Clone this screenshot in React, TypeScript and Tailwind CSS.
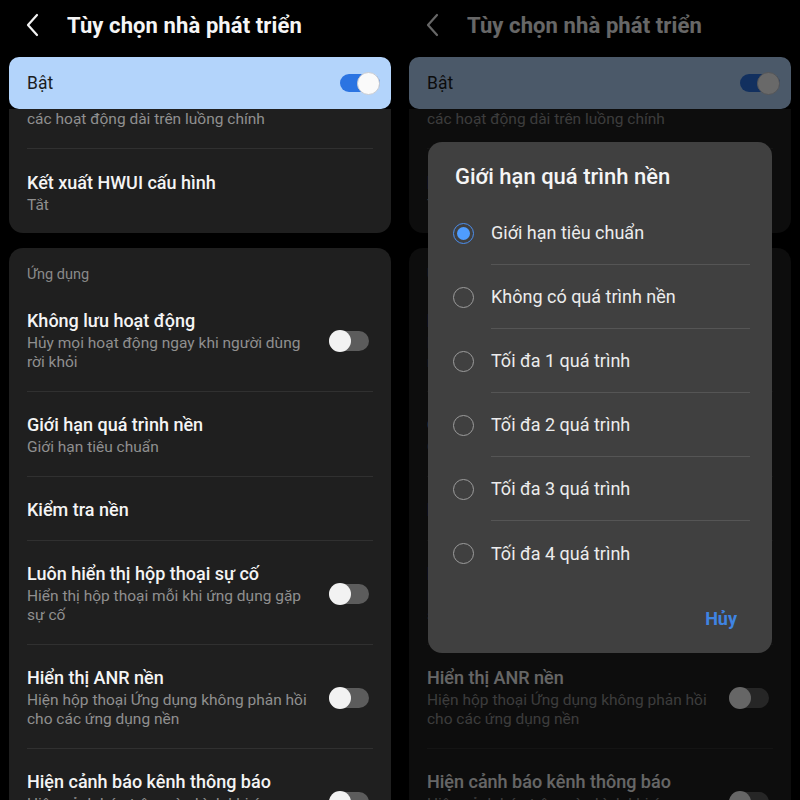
import React from 'react';

type Row = {
  title: string;
  sub?: string[];
  toggle?: boolean;
};

const appRows: Row[] = [
  { title: 'Không lưu hoạt động', sub: ['Hủy mọi hoạt động ngay khi người dùng', 'rời khỏi'], toggle: true },
  { title: 'Giới hạn quá trình nền', sub: ['Giới hạn tiêu chuẩn'] },
  { title: 'Kiểm tra nền' },
  { title: 'Luôn hiển thị hộp thoại sự cố', sub: ['Hiển thị hộp thoại mỗi khi ứng dụng gặp', 'sự cố'], toggle: true },
  { title: 'Hiển thị ANR nền', sub: ['Hiện hộp thoại Ứng dụng không phản hồi', 'cho các ứng dụng nền'], toggle: true },
  { title: 'Hiện cảnh báo kênh thông báo', sub: ['Hiện cảnh báo trên màn hình khi ứng', 'dụng đăng thông báo không có kênh'], toggle: true },
];

const options = [
  'Giới hạn tiêu chuẩn',
  'Không có quá trình nền',
  'Tối đa 1 quá trình',
  'Tối đa 2 quá trình',
  'Tối đa 3 quá trình',
  'Tối đa 4 quá trình',
];

function SwitchOff() {
  return (
    <div className="w-[40px] h-[20px] rounded-full bg-[#5c5c5c] flex items-center shrink-0">
      <div className="w-[22px] h-[22px] rounded-full bg-[#f2f2f2]" />
    </div>
  );
}

function SwitchOn() {
  return (
    <div className="w-[40px] h-[18px] rounded-full bg-[#2b74e2] flex items-center justify-end shrink-0">
      <div className="w-[23px] h-[23px] rounded-full bg-[#fafafa] border border-[#c9ccd2]" />
    </div>
  );
}

function SettingRow({ row, last }: { row: Row; last?: boolean }) {
  return (
    <div
      className={`flex items-center pt-[22px] ${row.sub ? 'pb-[19px]' : 'pb-[19px]'} ${
        last ? '' : 'border-b border-[#303030]'
      }`}
    >
      <div className="flex-1 min-w-0">
        <div className="text-[18px] leading-[22px] font-medium text-[#f4f4f4] whitespace-nowrap">{row.title}</div>
        {row.sub && (
          <div className="text-[15.5px] leading-[19px] text-[#8f8f8f] mt-[2px] whitespace-nowrap">
            {row.sub.map((s, i) => (
              <div key={i}>{s}</div>
            ))}
          </div>
        )}
      </div>
      {row.toggle && (
        <div className="ml-2 mr-[4px]">
          <SwitchOff />
        </div>
      )}
    </div>
  );
}

function Screen() {
  return (
    <div className="w-[400px] h-[800px] bg-black flex flex-col">
      {/* Top bar */}
      <div className="h-[50px] flex items-center shrink-0">
        <svg width="40" height="30" viewBox="0 0 40 30" className="ml-[12px]">
          <polyline points="25,5 16,15 25,25" fill="none" stroke="#f2f2f2" strokeWidth="2.2" strokeLinecap="round" strokeLinejoin="round" />
        </svg>
        <span className="ml-[15px] text-[22px] font-bold text-[#f5f5f5] tracking-[0.1px]">Tùy chọn nhà phát triển</span>
      </div>

      <div className="px-[9px] flex flex-col">
        {/* Master switch */}
        <div className="mt-[7px] h-[52px] rounded-[10px] bg-[#b3d4fb] flex items-center justify-between pl-[18px] pr-[11px] relative z-10">
          <span className="text-[17.5px] text-[#1b1d21]">Bật</span>
          <SwitchOn />
        </div>

        {/* Card 1 (scrolled under the master switch) */}
        <div className="bg-[#1f1f1f] rounded-b-[14px] px-[18px]">
          <div className="flex pb-[19px] border-b border-[#303030]">
            <span className="text-[15.5px] leading-[20px] text-[#8f8f8f]">các hoạt động dài trên luồng chính</span>
          </div>
          <div className="pt-[23px] pb-[18px]">
            <div className="text-[18px] leading-[22px] font-medium text-[#f4f4f4]">Kết xuất HWUI cấu hình</div>
            <div className="text-[15.5px] leading-[20px] text-[#8f8f8f] mt-[1px]">Tắt</div>
          </div>
        </div>

        {/* Card 2 */}
        <div className="mt-[15px] bg-[#1f1f1f] rounded-t-[14px] px-[18px]">
          <div className="pt-[17px] pb-[3px] text-[14.5px] leading-[20px] text-[#8a8a8a]">Ứng dụng</div>
          {appRows.map((r, i) => (
            <SettingRow key={i} row={r} last={i === appRows.length - 1} />
          ))}
        </div>
      </div>
    </div>
  );
}

function Radio({ checked }: { checked?: boolean }) {
  if (checked) {
    return (
      <div className="w-[21px] h-[21px] rounded-full border-[1.5px] border-[#4b8ff0] flex items-center justify-center shrink-0">
        <div className="w-[13px] h-[13px] rounded-full bg-[#4f9dff]" />
      </div>
    );
  }
  return <div className="w-[21px] h-[21px] rounded-full border-[1.5px] border-[#9c9c9c] shrink-0" />;
}

function Dialog() {
  return (
    <div className="w-[344px] bg-[#404040] rounded-[14px] flex flex-col mt-[-5px]">
      <div className="pt-[21px] pl-[27px] text-[22px] leading-[28px] font-medium text-[#f5f5f5]">
        Giới hạn quá trình nền
      </div>
      <div className="mt-[10px] flex flex-col">
        {options.map((o, i) => (
          <div key={i} className="h-[64px] flex items-center pl-[25px]">
            <Radio checked={i === 0} />
            <div
              className={`ml-[17px] mr-[22px] flex-1 h-full flex items-center ${
                i === options.length - 1 ? '' : 'border-b border-[#555555]'
              }`}
            >
              <span className="text-[18px] text-[#ececec]">{o}</span>
            </div>
          </div>
        ))}
      </div>
      <div className="flex justify-end pr-[35px] pt-[22px] pb-[22px]">
        <span className="text-[18px] leading-[24px] font-bold text-[#3f84e2]">Hủy</span>
      </div>
    </div>
  );
}

export default function App() {
  return (
    <div className="w-[800px] h-[800px] overflow-hidden flex bg-black" style={{ fontFamily: 'Roboto, "Noto Sans", sans-serif' }}>
      <div className="w-[400px] h-[800px] overflow-hidden">
        <Screen />
      </div>
      <div className="w-[400px] h-[800px] overflow-hidden relative">
        <Screen />
        <div className="absolute inset-0 z-20 bg-black/[0.58] flex items-center justify-center">
          <Dialog />
        </div>
      </div>
    </div>
  );
}
